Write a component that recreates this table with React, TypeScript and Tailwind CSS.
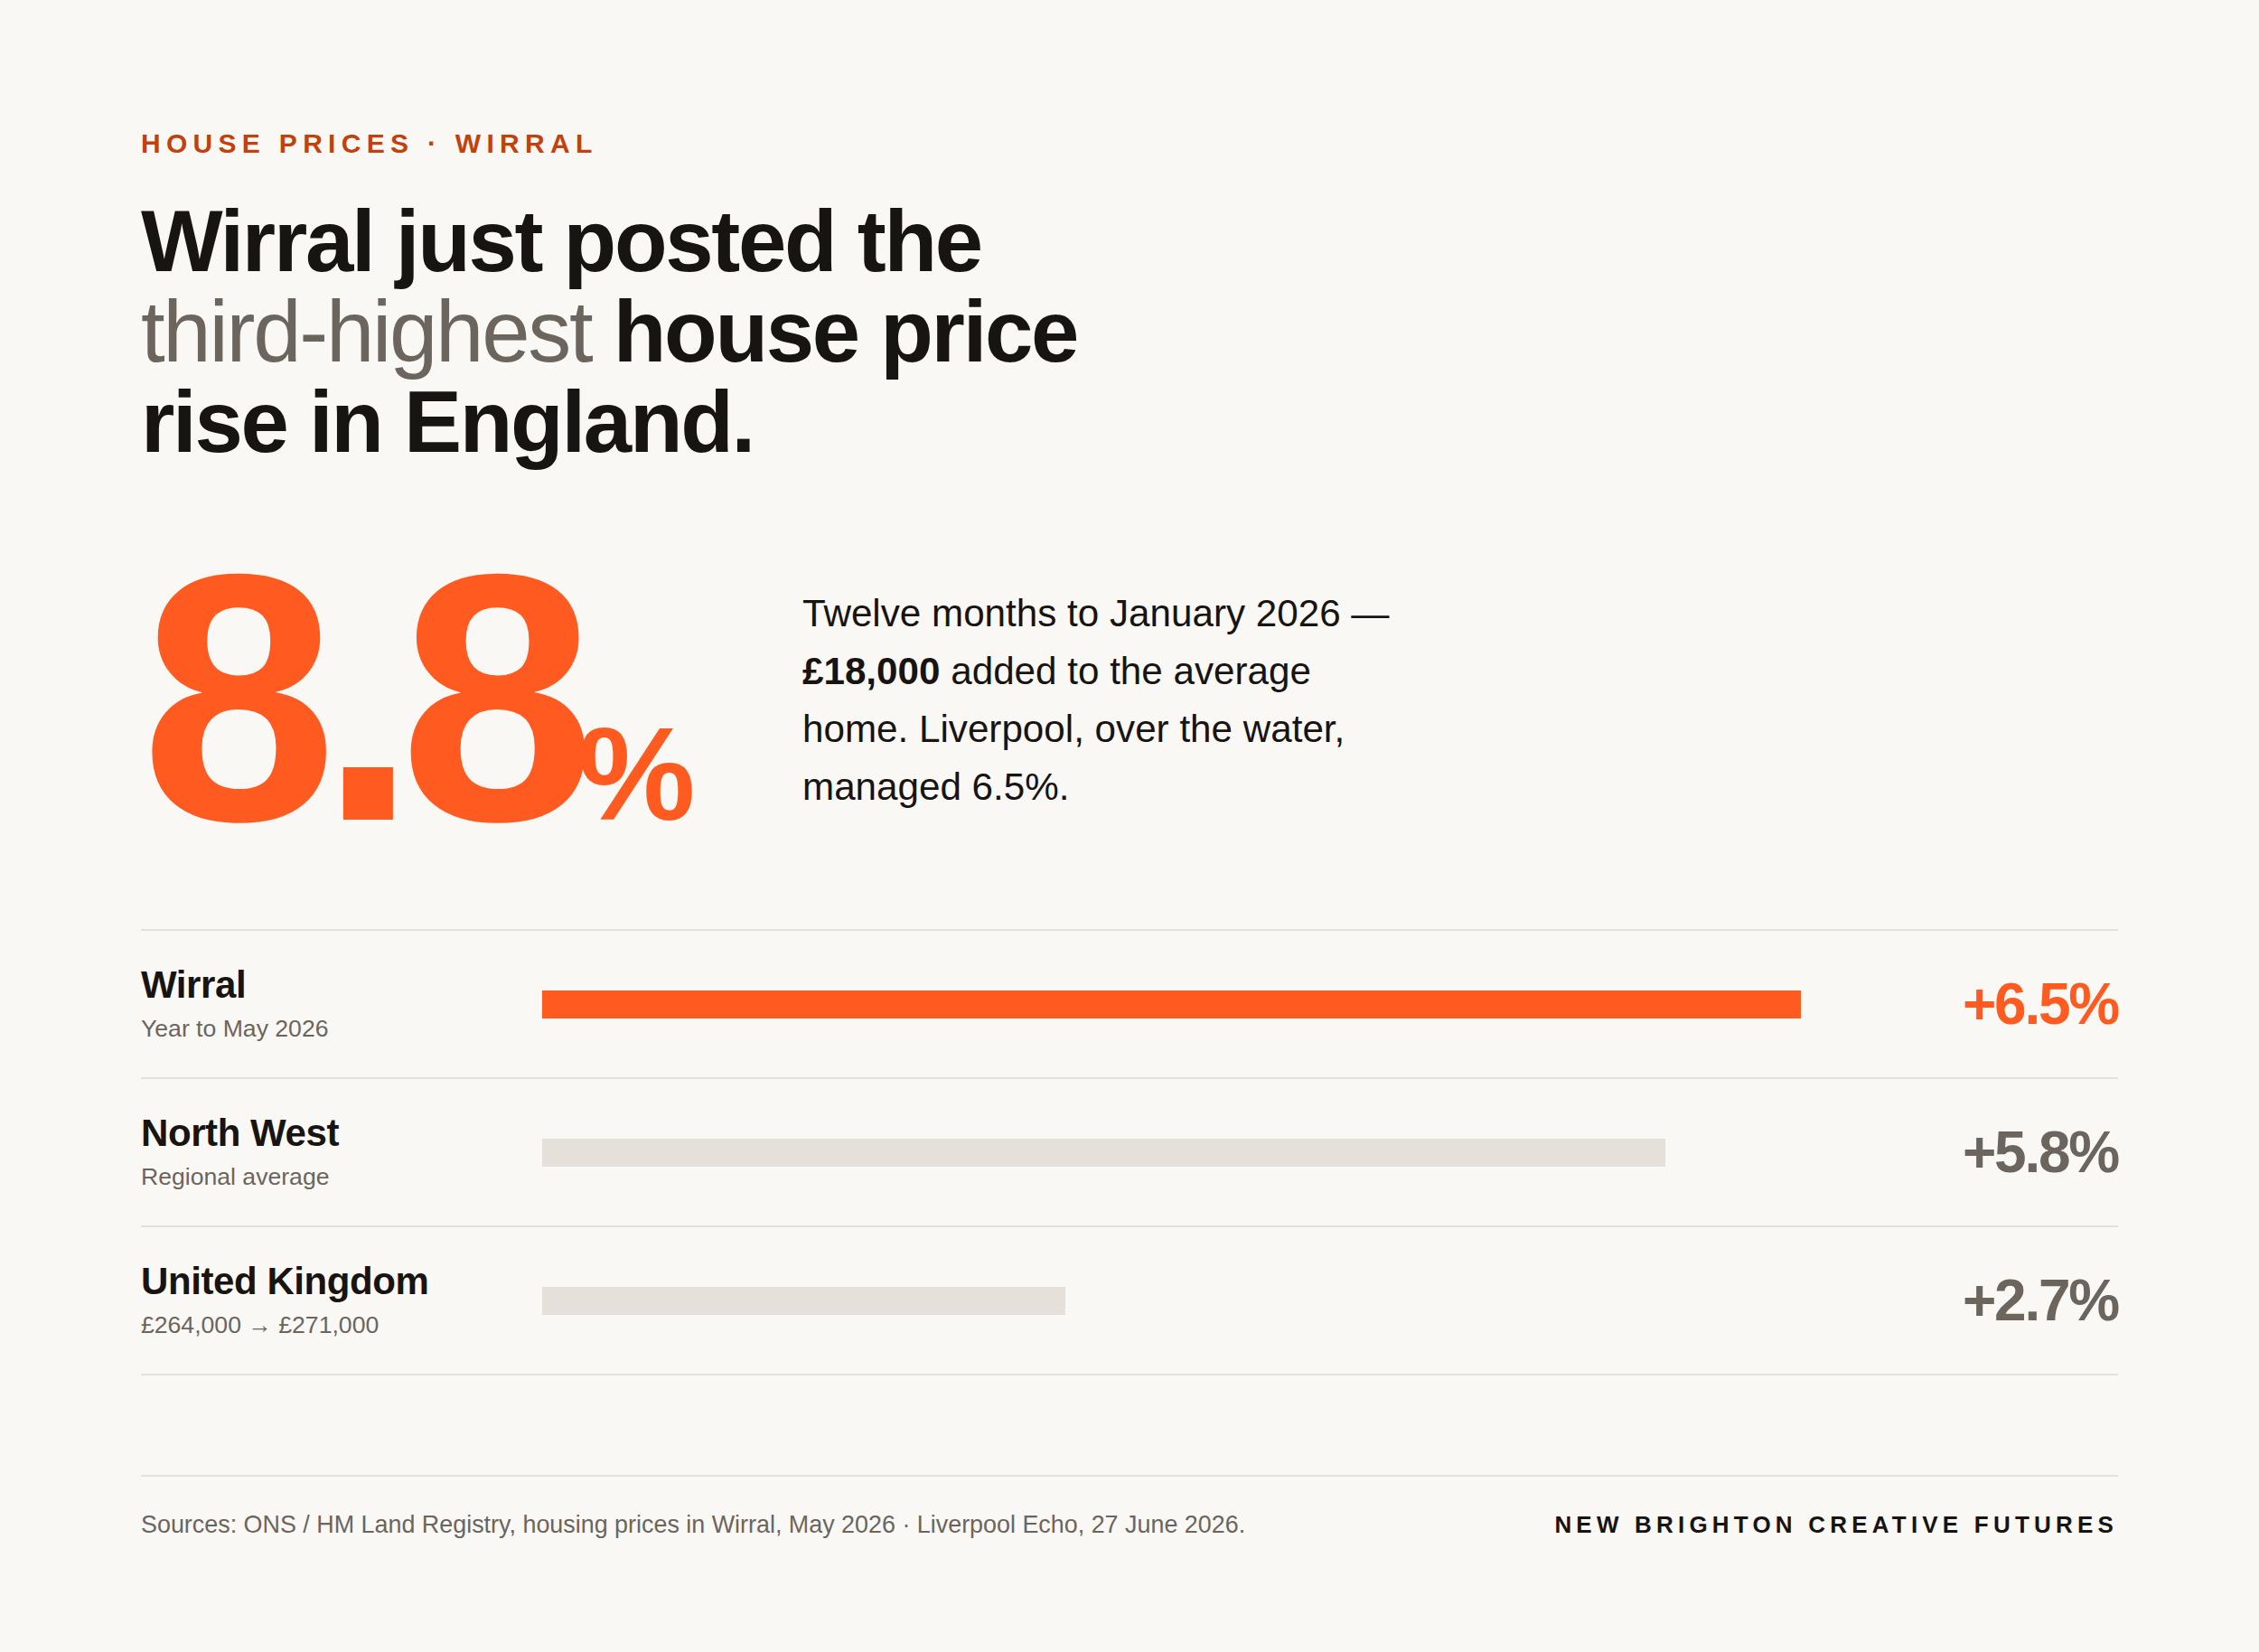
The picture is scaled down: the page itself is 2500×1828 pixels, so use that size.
import React from "react";

const rows = [
  { name: "Wirral", sub: "Year to May 2026", value: 6.5, hi: true },
  { name: "North West", sub: "Regional average", value: 5.8, hi: false },
  { name: "United Kingdom", sub: "£264,000 → £271,000", value: 2.7, hi: false },
];

export default function App() {
  return (
    <div className="min-h-screen w-full bg-[#faf8f5] font-['Liberation_Sans',Arial,sans-serif] text-[#171411] px-[156px] pt-[144px] pb-[100px]">
      <div className="text-[30px] leading-none font-bold tracking-[0.21em] text-[#c2410c]">
        HOUSE PRICES · WIRRAL
      </div>
      <h1 className="mt-[43px] max-w-[1100px] text-[96px] leading-[100px] font-bold tracking-[-0.024em] text-[#171411]">
        Wirral just posted the <span className="font-normal text-[#6b655e]">third-highest</span> house price rise in England.
      </h1>

      <div className="mt-[60px] flex items-center gap-[138px]">
        <div className="text-[390px] leading-none font-bold tracking-[-0.05em] text-[#ff5a1f] whitespace-nowrap">
          8.8<span className="text-[146px]">%</span>
        </div>
        <p className="mt-[6px] max-w-[670px] text-[42.2px] leading-[64px] text-[#171411]">
          Twelve months to January 2026 — <span className="font-bold">£18,000</span> added to the average home. Liverpool, over the water, managed 6.5%.
        </p>
      </div>

      <div className="mt-[61px] border-t-2 border-[#e5e0d9]">
        {rows.map((r) => (
          <div
            key={r.name}
            className="grid grid-cols-[400px_1fr_200px] gap-x-[44px] items-center h-[164px] border-b-2 border-[#e5e0d9]"
          >
            <div>
              <div className="text-[42px] leading-[1.1] font-bold tracking-[-0.01em] text-[#171411]">{r.name}</div>
              <div className="mt-2 text-[26.6px] leading-[1.3] text-[#6b655e]">{r.sub}</div>
            </div>
            <div className="h-[31px]">
              <div
                className={r.hi ? "h-full bg-[#ff5a1f]" : "h-full bg-[#e5e0d9]"}
                style={{ width: `${(r.value / 7) * 100}%` }}
              />
            </div>
            <div
              className={
                r.hi
                  ? "text-right text-[64px] leading-none font-bold tracking-[-0.035em] text-[#ff5a1f]"
                  : "text-right text-[64px] leading-none font-bold tracking-[-0.035em] text-[#6b655e]"
              }
            >
              +{r.value.toFixed(1)}%
            </div>
          </div>
        ))}
      </div>

      <div className="mt-[110px] border-t-2 border-[#e5e0d9] pt-[35px] flex items-baseline justify-between">
        <div className="text-[26.9px] leading-[1.4] text-[#6b655e]">
          Sources: ONS / HM Land Registry, housing prices in Wirral, May 2026 · Liverpool Echo, 27 June 2026.
        </div>
        <div className="text-[26px] leading-[1.4] font-bold tracking-[0.2em] text-[#171411]">
          NEW BRIGHTON CREATIVE FUTURES
        </div>
      </div>
    </div>
  );
}
